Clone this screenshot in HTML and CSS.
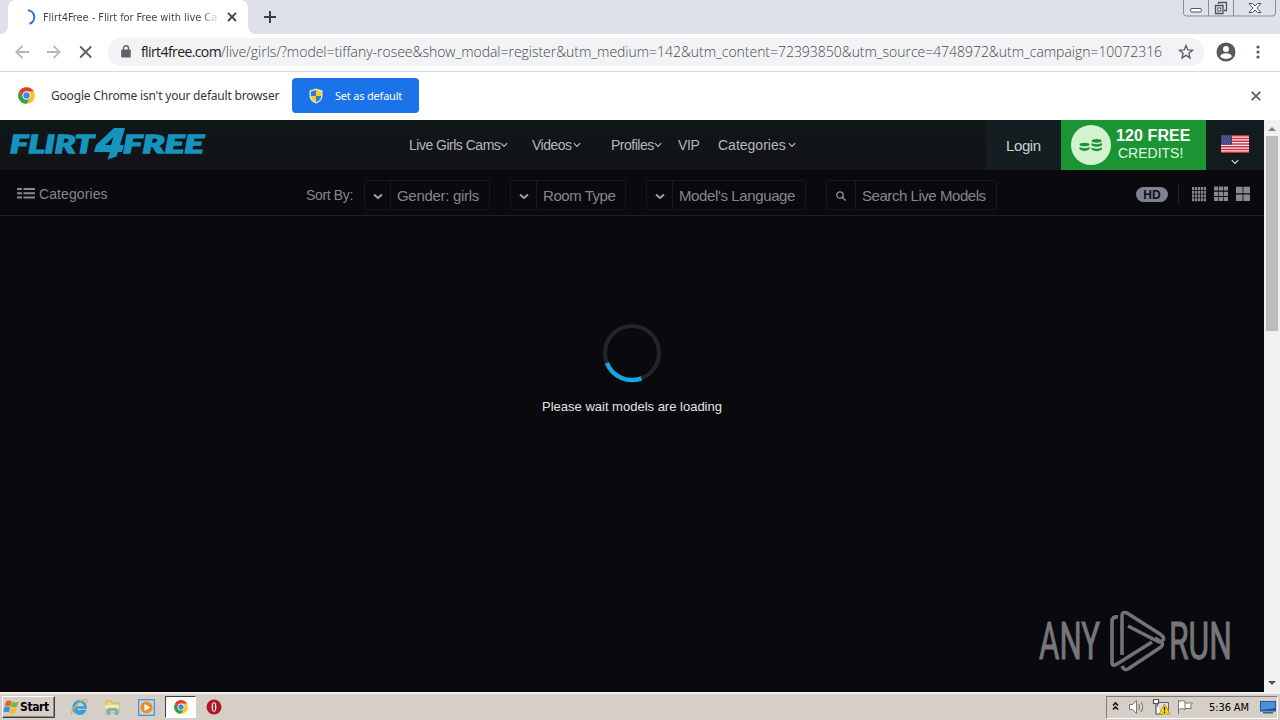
FILE: index.html
```html
<!DOCTYPE html>
<html lang="en">
<head>
<meta charset="utf-8">
<title>Flirt4Free - Flirt for Free with live Cams</title>
<link rel="stylesheet" href="styles.css">
</head>
<body>
<svg class="defs" width="0" height="0">
  <symbol id="chev" viewBox="0 0 8 6"><path d="M.8 1.200 4 4.400 7.200 1.200" fill="none" stroke="currentColor" stroke-width="1.200"/></symbol>
  <symbol id="chevb" viewBox="0 0 10 7"><path d="M1 1.500 5 5 9 1.500" fill="none" stroke="currentColor" stroke-width="1.900"/></symbol>
  <symbol id="chrome" viewBox="0 0 18 18">
    <circle cx="9" cy="9" r="8.800" fill="#fbc31c"/>
    <path d="M1.400 4.500A8.800 8.800 0 0 1 16.600 4.500H9L5.200 11.200Z" fill="#e33b2e"/>
    <path d="M1.400 4.500A8.800 8.800 0 0 0 9 17.800l3.800-6.600H5.100Z" fill="#2da14c"/>
    <circle cx="9" cy="9" r="4.400" fill="#fff"/><circle cx="9" cy="9" r="3.400" fill="#4286ee"/>
  </symbol>
</svg>

<header class="tabstrip">
  <div class="edge"></div>
  <div class="tab">
    <svg class="spin" width="16" height="16" viewBox="0 0 16 16"><path d="M7 1.200A7 7 0 0 1 8.500 14.800" fill="none" stroke="#2f6fd0" stroke-width="2"/></svg>
    <span class="tab-title">Flirt4Free - Flirt for Free with live Ca</span>
    <svg class="tab-close" width="10" height="10" viewBox="0 0 10 10"><path d="M1 1l8 8M9 1 1 9" stroke="#45494d" stroke-width="1.800"/></svg>
  </div>
  <div class="edge right"></div>
  <svg class="plus" width="12" height="12" viewBox="0 0 12 12"><path d="M6 0v12M0 6h12" stroke="#3c4043" stroke-width="2"/></svg>
  <svg class="winctl" width="94" height="18" viewBox="0 0 94 18">
    <path d="M.5 0v13q0 3 3 3h86q3 0 3-3V0M25.500 0v16M50.500 0v16" fill="none" stroke="#858b98"/>
    <rect x="7.500" y="8.500" width="11" height="3.500" rx="1.500" fill="#fff" stroke="#50545c"/>
    <path d="M35.500 4V2.500h8v8H41M32.500 5.500h7.500v8h-7.500z" fill="none" stroke="#50545c" stroke-width="1.300"/><rect x="34.800" y="8" width="3" height="3" fill="#fff" stroke="#50545c"/>
    <path d="M66 3.500h3.500L72 6l2.500-2.500H78L74 8l4 4.500h-3.500L72 10l-2.500 2.500H66L70 8z" fill="#fff" stroke="#50545c"/>
  </svg>
</header>

<div class="toolbar">
  <svg width="94" height="20" viewBox="0 0 94 20">
    <path d="M15 10H2.500M8.500 3.800 2.300 10l6.200 6.200M33 10h12.500M39.500 3.800l6.200 6.200-6.200 6.200" fill="none" stroke="#b5b7b9" stroke-width="1.800"/>
    <path d="M66.200 4.500l11 11m0-11-11 11" stroke="#5f6368" stroke-width="1.900"/>
  </svg>
  <div class="omnibox">
    <svg width="10" height="13" viewBox="0 0 10 13"><rect x=".2" y="4.500" width="9.600" height="8" rx="1" fill="#5f6368"/><path d="M2.500 5V3.200a2.500 2.500 0 0 1 5 0V5" fill="none" stroke="#5f6368" stroke-width="1.400"/></svg>
    <span class="url"><b>flirt4free.com</b>/live/girls/?model=tiffany-rosee&amp;show_modal=register&amp;utm_medium=142&amp;utm_content=72393850&amp;utm_source=4748972&amp;utm_campaign=10072316</span>
    <svg class="star" width="16" height="16" viewBox="0 0 16 16"><path d="M8 1.600l1.800 4.300 4.700.4-3.600 3 1.100 4.600L8 11.400l-4 2.500 1.100-4.600-3.600-3 4.700-.4z" fill="none" stroke="#5f6368" stroke-width="1.400"/></svg>
  </div>
  <svg class="avatar" width="20" height="20" viewBox="0 0 20 20"><circle cx="10" cy="10" r="9.500" fill="#55595e"/><circle cx="10" cy="7" r="3" fill="#fff"/><path d="M4 14.200c1.500-4 10.500-4 12 0-3 3.500-9 3.500-12 0z" fill="#fff"/></svg>
  <svg class="dots" width="4" height="14" viewBox="0 0 4 14"><g fill="#55595e"><circle cx="2" cy="2" r="1.600"/><circle cx="2" cy="7" r="1.600"/><circle cx="2" cy="12" r="1.600"/></g></svg>
</div>

<div class="infobar">
  <svg width="17" height="17"><use href="#chrome"/></svg>
  <span class="info-text">Google Chrome isn't your default browser</span>
  <div class="default-btn">
    <svg width="14" height="16" viewBox="0 0 14 16"><path d="M7 .5 13.500 2.500V8C13.500 12 10 14.500 7 15.500 4 14.500.5 12 .5 8V2.500z" fill="#e9e5c4"/><path d="M7 2v6H1.800V3.500zM7 8h5.200C12 11.500 9.500 13.200 7 14z" fill="#2c7fd3"/><path d="M7 2v6h5.200V3.500zM7 8H1.800C2 11.500 4.500 13.200 7 14z" fill="#f8cc27"/></svg>
    <span>Set as default</span>
  </div>
  <svg class="info-close" width="10" height="10" viewBox="0 0 10 10"><path d="M.8.8l8.400 8.400M9.200.8.8 9.200" stroke="#606468" stroke-width="1.900"/></svg>
</div>

<div class="view">
  <main class="site">
    <div class="site-head">
      <svg class="logo" width="198" height="36" viewBox="0 0 198 36">
        <g fill="#1594bd" stroke="#1594bd" font-family="Lato, 'Liberation Sans', sans-serif" font-weight="900" font-style="italic">
          <text x="1" y="27" font-size="24" stroke-width="1.400" textLength="84" lengthAdjust="spacingAndGlyphs">FLIRT</text>
          <text x="114" y="27" font-size="24" stroke-width="1.400" textLength="81" lengthAdjust="spacingAndGlyphs">FREE</text>
        </g>
        <path d="M105 2h11l-5 17h4l-2 7h-4l-1.500 4.500-9 3 2.500-7.500H85l2-7zM102 19l2.500-8-8.500 8z" fill="#1594bd" fill-rule="evenodd"/>
      </svg>
      <nav class="nav">
        <a class="n1"><span>Live Girls Cams</span><svg width="8" height="6"><use href="#chev"/></svg></a>
        <a class="n2"><span>Videos</span><svg width="8" height="6"><use href="#chev"/></svg></a>
        <a class="n3"><span>Profiles</span><svg width="8" height="6"><use href="#chev"/></svg></a>
        <a class="n4"><span>VIP</span></a>
        <a class="n5"><span>Categories</span><svg width="8" height="6"><use href="#chev"/></svg></a>
      </nav>
      <div class="login"><span>Login</span></div>
      <div class="credits">
        <svg width="40" height="40" viewBox="0 0 40 40"><circle cx="20" cy="20" r="20" fill="#d3f3cf"/>
          <g fill="#1b9434"><ellipse cx="13.500" cy="19.500" rx="5" ry="1.800"/><path d="M8.500 22q5 2.500 10 0v2.200q-5 3.600-10 0zM20.500 18q5 2.500 10.500 0v2.200q-5 3-10.500 0zM20.500 22.500q5 2.500 10.500 0v2q-5 3.600-10.500 0z"/><ellipse cx="25.700" cy="15.800" rx="5" ry="1.900"/></g></svg>
        <div class="cr-text"><b>120 FREE</b><span>CREDITS!</span></div>
      </div>
      <div class="lang">
        <svg width="28" height="18" viewBox="0 0 28 18"><rect width="28" height="18" fill="#f6eeee"/><path d="M0 .8h28M0 3.500h28M0 6.300h28M0 9h28M0 11.700h28M0 14.500h28M0 17.200h28" stroke="#d22b3c" stroke-width="1.400"/><rect width="11" height="9.700" fill="#3c4380"/><path d="M1 2h9M2 4h8M1 6h9M2 8h8" stroke="#8d92bb" stroke-width=".7" stroke-dasharray="1 1"/></svg>
        <svg class="lchev" width="8" height="6"><use href="#chev"/></svg>
      </div>
    </div>

    <div class="filters">
      <svg class="list-ic" width="18" height="11" viewBox="0 0 18 11"><path d="M0 1h5M0 5.300h5M0 9.500h5M6.500 1H18M6.500 5.300H18M6.500 9.500H18" stroke="#888895" stroke-width="1.900"/></svg>
      <span class="cats">Categories</span>
      <span class="sort">Sort By:</span>
      <div class="chip c1"><i><svg width="10" height="7"><use href="#chevb"/></svg></i><span>Gender: girls</span></div>
      <div class="chip c2"><i><svg width="10" height="7"><use href="#chevb"/></svg></i><span>Room Type</span></div>
      <div class="chip c3"><i><svg width="10" height="7"><use href="#chevb"/></svg></i><span>Model's Language</span></div>
      <div class="chip c4"><i><svg width="10" height="10" viewBox="0 0 10 10"><circle cx="4" cy="4" r="3.200" fill="none" stroke="#92929c" stroke-width="1.300"/><path d="M6.300 6.300 9.600 9.600" stroke="#92929c" stroke-width="1.400"/></svg></i><span>Search Live Models</span></div>
      <div class="hd">HD</div>
      <svg class="grids" width="74" height="22" viewBox="0 0 74 22">
        <path d="M.5 1v20" stroke="#22222a"/>
        <g stroke="#888895" fill="none">
          <path d="M14 5.500h14M14 9.300h14M14 13h14M14 16.700h14" stroke-width="3" stroke-dasharray="2.200 .75"/>
          <path d="M36 5.500h14M36 10.800h14M36 16h14" stroke-width="4.200" stroke-dasharray="4.200 .7"/>
          <path d="M58 7h14M58 14.800h14" stroke-width="6.600" stroke-dasharray="6.600 .8"/>
        </g>
      </svg>
    </div>

    <div class="loading">
      <svg width="60" height="60" viewBox="0 0 60 60"><circle cx="30" cy="30" r="27" fill="none" stroke="#252529" stroke-width="4"/><path d="M4.900 40A27 27 0 0 0 39.500 55.300" fill="none" stroke="#15a5e0" stroke-width="4.500"/></svg>
      <p>Please wait models are loading</p>
    </div>

    <svg class="mark" width="194" height="64" viewBox="0 0 194 64">
      <g fill="#77777b" stroke="#77777b" stroke-width="1" font-family="Roboto, 'Liberation Sans', sans-serif" font-size="52">
        <text transform="translate(1 50) scale(.61 1)" textLength="100" lengthAdjust="spacingAndGlyphs">ANY</text>
        <text transform="translate(131 50) scale(.61 1)" textLength="103" lengthAdjust="spacingAndGlyphs">RUN</text>
      </g>
      <g fill="none" stroke="#737377" stroke-width="3.600" stroke-linejoin="round">
        <path d="M80 8q-6-1-6 5v40q0 5 5 2l35-22"/>
        <path d="M84 46V7q0-5 5-3l33 21q6 4 2 7-2 2-5 0L90 17M117 29l6 4q3 2 0 5L90 60q-4 2-6-3"/>
      </g>
    </svg>
  </main>
  <div class="scroll">
    <svg width="16" height="15" viewBox="0 0 16 15"><path d="M4 11h8L8 7z" fill="#858585"/></svg>
    <div class="thumb"></div>
    <svg class="down" width="16" height="16" viewBox="0 0 16 16"><path d="M4 5h8L8 9z" fill="#505050"/></svg>
  </div>
</div>

<footer class="taskbar">
  <div class="start">
    <svg width="16" height="16" viewBox="0 0 16 16"><path d="M3 2.500q3-2 5.500 0L7.200 7.500Q4.500 6 1.700 7.500z" fill="#e85c28"/><path d="M9 2.800q3 1.500 6.500 0l-1.500 5q-3 1.500-6.300 0z" fill="#76b83a"/><path d="M1.500 8.300q2.700-1.500 5.500 0L5.700 13.500Q3 12 .2 13.500z" fill="#3d8fd8"/><path d="M7.600 8.700q3 1.500 6.200 0L12.300 14q-2.800 1.500-6 0z" fill="#f4bc26"/></svg>
    <span>Start</span>
  </div>
  <svg class="ie" width="18" height="18" viewBox="0 0 18 18"><path d="M5 9.500h10.500A6 6.200 0 1 0 14.500 13h-3Q8.500 15 5.500 11" fill="none" stroke="#35a0dc" stroke-width="2.400"/><path d="M2 16.500C-.5 13 12-.5 16.500 2q1 1-.5 3" fill="none" stroke="#d8b03c" stroke-width="1.300"/></svg>
  <svg class="folder" width="17" height="17" viewBox="0 0 17 17"><path d="M2 2h5l1 2h7v10H2z" fill="#f0d477" stroke="#c7a545" stroke-width=".8"/><path d="M1 6h14v4H1z" fill="#fae9a5"/><path d="M3 16v-5q0-2 2-2h7q2 0 2 2v5h-3v-4H6v4z" fill="#62b8dc"/></svg>
  <svg class="wmp" width="17" height="17" viewBox="0 0 17 17"><rect x=".7" y=".7" width="15.600" height="15.600" fill="#bcdcf0" stroke="#5792bd" stroke-width="1.300"/><circle cx="8.500" cy="8.500" r="6" fill="#f28b1d"/><path d="M6.500 5v7l6-3.500z" fill="#fff"/></svg>
  <div class="active"><svg width="14" height="14" viewBox="0 0 18 18"><use href="#chrome" width="18" height="18"/></svg></div>
  <svg class="opera" width="16" height="16" viewBox="0 0 16 16"><circle cx="8" cy="8" r="7.500" fill="#b71620"/><ellipse cx="8" cy="8" rx="2.800" ry="5.200" fill="#f0f0f0" stroke="#7e0a10" stroke-width=".6"/><path d="M8 4.500v7" stroke="#8d1a20" stroke-width="1.800"/></svg>
  <div class="tray">
    <svg width="90" height="18" viewBox="0 0 90 18">
      <path d="M6 7.500 8.500 5 11 7.500M6 11.500 8.500 9l2.500 2.500" fill="none" stroke="#111" stroke-width="1.600"/>
      <path d="M22.500 6.500h3l4-4v13l-4-4h-3z" fill="#fff" stroke="#777"/><path d="M31.500 6q2 3 0 6M34 4q3.500 5 0 10" fill="none" stroke="#808080" stroke-width="1.200"/>
      <path d="M50.500 4.500h11v9h-11z" fill="#ddd" stroke="#666"/><path d="M46.500 1.500h5v4h-5zM49 6v10h6" fill="#fff" stroke="#555" stroke-width="1.200"/><path d="M57.500 6 63 16H52z" fill="#f7d525" stroke="#bc9a10"/><path d="M57.500 9v3.500M57.500 13.500V15" stroke="#222" stroke-width="1.200"/>
      <path d="M71.500 2v14M72 3.500q4-2 6 0v8q-3-2-6 0M78 5h7.500l-2 3 1 2.500H78" fill="#fff" stroke="#777"/>
    </svg>
    <span class="clock">5:36 AM</span>
    <svg class="desk" width="16" height="14" viewBox="0 0 16 14"><path d="M0 1h16v10.500H0z" fill="#1f56a3"/><path d="M1 2h14v6L1 10z" fill="#4a90dc"/><path d="M3 12.800h10" stroke="#365778" stroke-width="1.400"/></svg>
  </div>
</footer>
</body>
</html>
```
FILE: styles.css
```css
* { box-sizing: border-box; }
body { margin: 0; width: 1280px; height: 720px; overflow: hidden; display: flex; flex-direction: column; background: #fff; font-family: "Liberation Sans", Arial, sans-serif; }
svg { display: block; flex: none; }
.defs { position: absolute; }
span, b { white-space: nowrap; }

.tabstrip { height: 34px; flex: none; display: flex; align-items: flex-start; background: #dee1e8; }
.edge { width: 8px; height: 34px; background: #fff; }
.edge::after { content: ""; display: block; height: 34px; background: #dee1e8; border-bottom-right-radius: 8px; }
.edge.right::after { border-radius: 0 0 0 8px; }
.tab { width: 240px; height: 34px; display: flex; align-items: center; background: #fff; border-radius: 8px 8px 0 0; padding-left: 13px; }
.tab-title { width: 176px; margin-left: 6px; font: 11px "DejaVu Sans Condensed", "DejaVu Sans", sans-serif; letter-spacing: -.07px; color: transparent; background: linear-gradient(90deg, #3c4043 90%, #d0d0d0 97%); background-clip: text; }
.tab-close { margin-left: 8px; }
.plus { margin: 11px 0 0 8px; }
.winctl { margin-left: auto; margin-right: 3px; }

.toolbar { height: 38px; flex: none; display: flex; align-items: center; border-bottom: 1px solid #d9dadc; padding: 0 0 2px 14px; }
.omnibox { width: 1096px; height: 28px; border-radius: 14px; background: #f1f3f4; display: flex; align-items: center; padding-left: 13px; }
.url { width: 1022px; margin-left: 10px; font: 300 14px "Open Sans", "Noto Sans", sans-serif; letter-spacing: -.03px; color: #46494e; }
.url b { font-weight: 400; color: #202124; letter-spacing: -.6px; }
.star { margin-left: 15px; }
.avatar { margin-left: 12px; }
.dots { margin-left: 20px; }

.infobar { height: 48px; flex: none; display: flex; align-items: center; padding: 0 0 1px 18px; }
.info-text { width: 229px; margin-left: 16px; font: 12px "Noto Sans", sans-serif; letter-spacing: -.19px; color: #333639; }
.default-btn { margin-left: 12px; width: 127px; height: 35px; border-radius: 4px; background: #1a73e8; color: #fff; display: flex; align-items: center; padding-left: 17px; gap: 12px; font: 11px "Noto Sans", sans-serif; letter-spacing: -.2px; }
.info-close { margin-left: auto; margin-right: 19px; }

.view { height: 572px; flex: none; display: flex; }
.site { width: 1264px; background: #09090e; position: relative; }
.site-head { height: 50px; display: flex; background: linear-gradient(#101719, #121217); }
.logo { margin: 6px 0 0 9px; }
.nav { margin-left: 202px; width: 577px; display: flex; height: 50px; align-items: center; color: #b3b9bb; font-size: 14px; letter-spacing: -.5px; }
.nav a { display: flex; align-items: center; justify-content: space-between; }
.n1 { width: 99px; }
.n2 { width: 49px; margin-left: 24px; }
.n3 { width: 51px; margin-left: 30px; }
.n4 { width: 21px; margin-left: 16px; letter-spacing: -.4px; }
.n5 { width: 78px; margin-left: 19px; letter-spacing: 0; }
.login { width: 75px; background: #141d20; color: #cdd2d4; display: flex; align-items: center; padding-left: 20px; font-size: 15px; letter-spacing: -.4px; }
.credits { width: 145px; background: #1b9434; display: flex; align-items: center; padding-left: 10px; color: #fff; }
.cr-text { margin: -1px 0 0 5px; display: flex; flex-direction: column; }
.cr-text b { font-size: 16px; line-height: 18px; letter-spacing: .1px; }
.cr-text span { font-size: 14px; line-height: 17px; margin-left: 2px; letter-spacing: 0; color: #e1f4e5; }
.lang { width: 58px; background: #121b1e; display: flex; flex-direction: column; align-items: center; padding-top: 15px; color: #ddd; }
.lchev { margin-top: 6px; }

.filters { height: 46px; border-bottom: 1px solid #202026; display: flex; align-items: center; padding-left: 17px; color: #858591; }
.list-ic { margin: 2px 4px 0 0; }
.cats { width: 267px; font-size: 14px; letter-spacing: .1px; margin-top: 3px; }
.sort { width: 58px; font-size: 14px; letter-spacing: -.35px; margin-top: 5px; }
.chip { height: 30px; margin-top: 4px; margin-right: 20px; border: 1px solid #17171d; border-radius: 3px; display: flex; align-items: center; font-size: 15px; }
.chip i { width: 26px; height: 28px; border-right: 1px solid #17171d; display: flex; align-items: center; justify-content: center; color: #a4a4ae; padding-top: 3px; }
.chip span { margin-left: 6px; margin-top: 2px; }
.c1 { width: 126px; letter-spacing: -.3px; }
.c2 { width: 116px; letter-spacing: -.45px; }
.c3 { width: 160px; letter-spacing: -.38px; }
.c4 { width: 171px; letter-spacing: -.45px; }
.c4 i { width: 29px; }
.hd { margin-left: 119px; margin-top: 4px; width: 32px; height: 15px; border-radius: 8px; background: #7e818e; color: #111116; font: bold 12px/16px "Liberation Sans", sans-serif; text-align: center; }
.grids { margin: 3px 0 0 10px; }

.loading { display: flex; flex-direction: column; align-items: center; padding-top: 107px; }
.loading p { margin: 16px 0 0; font-size: 13px; line-height: 16px; color: #e2e2e4; }
.mark { position: absolute; right: 32px; bottom: 19px; }
.scroll { width: 16px; background: #f1f1f1; display: flex; flex-direction: column; }
.thumb { width: 12px; height: 195px; margin: 1px auto 0; background: #bcbcbc; }
.down { margin-top: auto; }

.taskbar { height: 28px; flex: none; background: #d5cfc7; border-top: 2px solid #f2f0ec; display: flex; align-items: center; padding-left: 2px; }
.start { width: 53px; height: 22px; border: 1px solid; border-color: #fff #404040 #404040 #fff; box-shadow: inset -1px -1px #8c8881; display: flex; align-items: center; gap: 1px; font: bold 12px "DejaVu Sans Condensed", "DejaVu Sans", sans-serif; color: #000; }
.start span { letter-spacing: -.4px; }
.ie { margin-left: 15px; }
.folder { margin-left: 16px; }
.wmp { margin-left: 17px; }
.active { margin-left: 10px; width: 31px; height: 22px; background: #fff; border: 1px solid; border-color: #404040 #fff #fff #404040; display: flex; align-items: center; justify-content: center; }
.opera { margin-left: 10px; }
.tray { margin-left: auto; margin-right: 2px; width: 172px; height: 23px; border: 1px solid; border-color: #807c75 #fff #fff #807c75; display: flex; align-items: center; }
.clock { width: 42px; margin-left: 12px; font: 11px "DejaVu Sans Condensed", "DejaVu Sans", sans-serif; color: #000; letter-spacing: -.1px; }
.desk { margin-left: 9px; }
```
